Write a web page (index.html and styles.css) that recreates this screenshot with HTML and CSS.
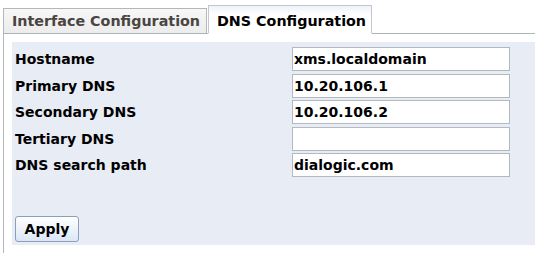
FILE: index.html
```html
<!DOCTYPE html>
<html>
<head>
<meta charset="utf-8">
<link rel="stylesheet" href="styles.css">
</head>
<body>
<div class="tabs">
  <div class="tabbar">
    <div class="tab">Interface Configuration</div>
    <div class="tab active">DNS Configuration</div>
  </div>
  <div class="panel-wrap">
    <div class="panel">
      <div class="form">
        <label class="label">Hostname</label>
        <input class="field" type="text" value="xms.localdomain">
        <label class="label">Primary DNS</label>
        <input class="field" type="text" value="10.20.106.1">
        <label class="label">Secondary DNS</label>
        <input class="field" type="text" value="10.20.106.2">
        <label class="label">Tertiary DNS</label>
        <input class="field" type="text" value="">
        <label class="label">DNS search path</label>
        <input class="field" type="text" value="dialogic.com">
      </div>
      <button class="apply">Apply</button>
    </div>
  </div>
</div>
</body>
</html>
```
FILE: styles.css
```css
html, body {
  margin: 0;
  padding: 0;
  background: #ffffff;
  font-family: "DejaVu Sans", Verdana, sans-serif;
  font-weight: bold;
  font-size: 14px;
  color: #000;
}
.tabs {
  margin-left: 3px;
}
.tabbar {
  display: flex;
  align-items: flex-end;
  height: 33px;
  border-bottom: 1px solid #aeb2bb;
}
.tab {
  box-sizing: border-box;
  width: 204px;
  padding: 0 0 0 8px;
  font-size: 14.3px;
  line-height: 24px;
  height: 26px;
  margin-bottom: -1px;
  border: 1px solid #b3b6bd;
  border-bottom-color: #aeb2bb;
  background: linear-gradient(#f7f7f7, #ececec);
  color: #4a4542;
  white-space: nowrap;
}
.tab.active {
  width: 164px;
  margin-left: 1px;
  height: 29px;
  padding-top: 3px;
  padding-left: 8px;
  border-color: #c3c7cf;
  border-bottom-color: #ffffff;
  background: linear-gradient(#eef3fb, #ffffff 35%);
  color: #000;
}
.panel-wrap {
  border-left: 1px solid #b3b6bd;
  padding: 8px 0 8px 8px;
}
.panel {
  background: #e8ecf4;
  padding: 5px 0 3px 3px;
}
.form {
  display: grid;
  grid-template-columns: 277px 218px;
  grid-auto-rows: 24px;
  row-gap: 2.5px;
  align-items: center;
}
.label {
  line-height: 24px;
}
.field {
  box-sizing: border-box;
  width: 218px;
  height: 24px;
  margin: 0;
  padding: 0 1px;
  border: 1px solid #b4b8c0;
  background: #fff;
  font: inherit;
  color: #000;
  outline: none;
}
.apply {
  display: block;
  box-sizing: border-box;
  margin-top: 39px;
  width: 64px;
  height: 26px;
  padding: 0;
  border: 1px solid #8d9fb8;
  border-radius: 3px;
  background: linear-gradient(#ffffff, #dbe7f6);
  font: inherit;
  color: #000;
}
```
